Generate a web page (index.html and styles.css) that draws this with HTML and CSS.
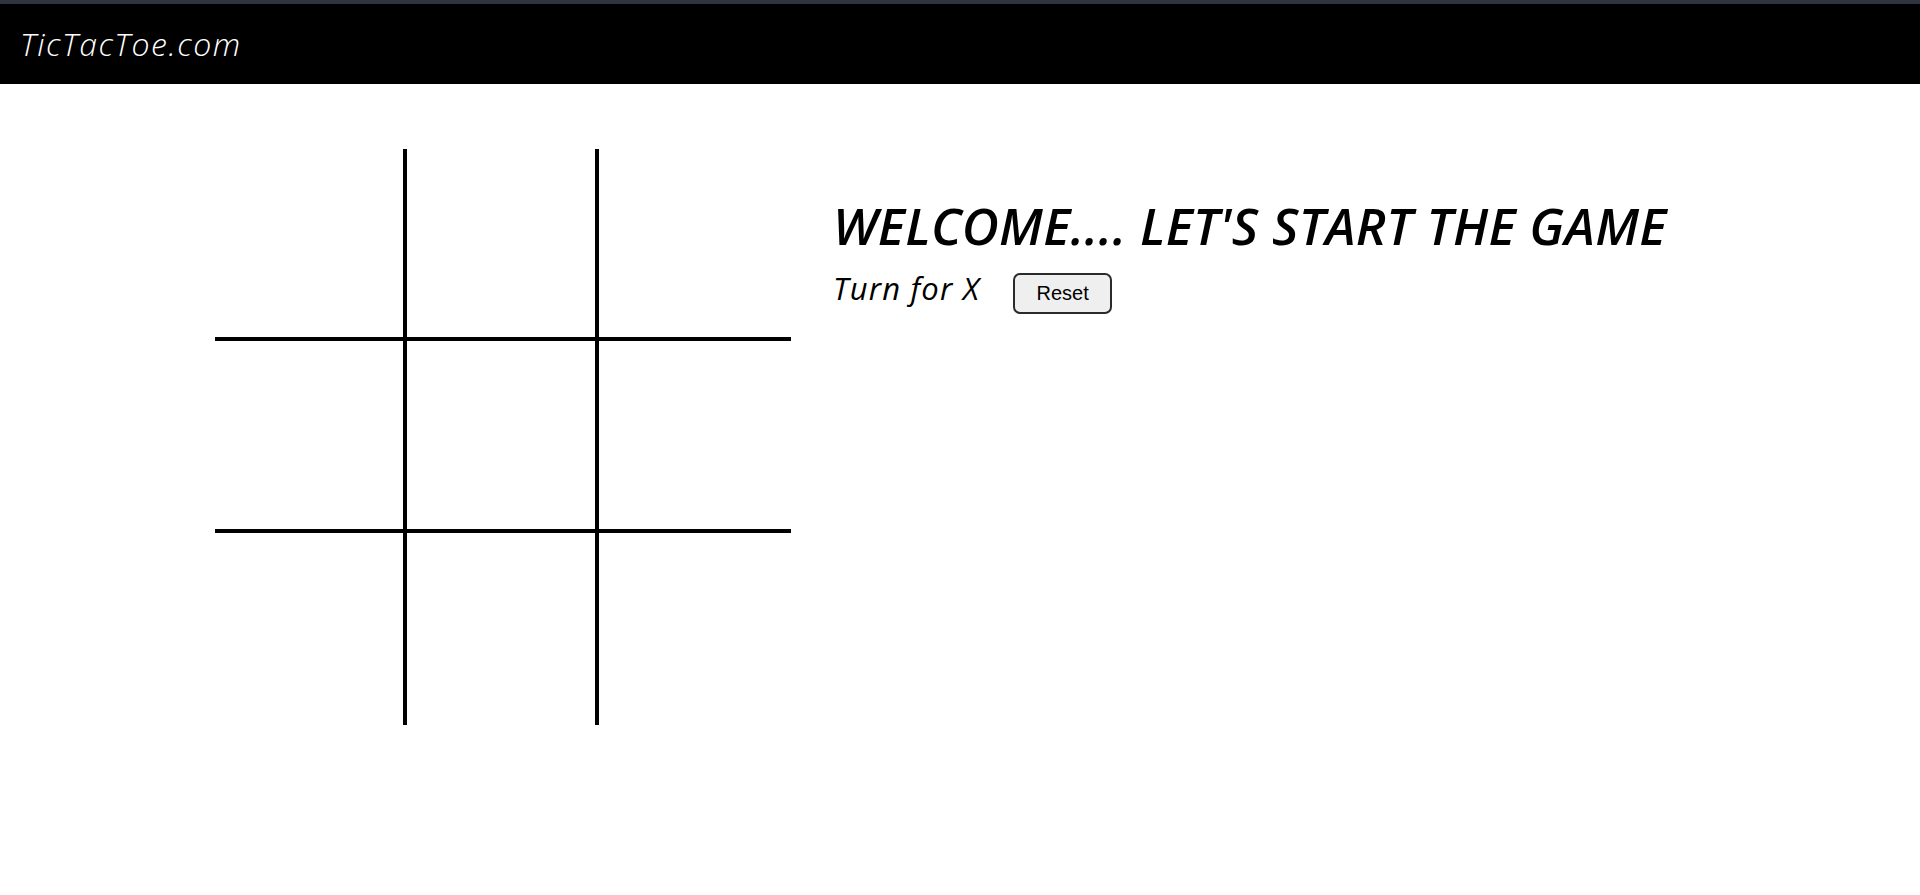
FILE: index.html
```html
<!DOCTYPE html>
<html lang="en">
<head>
<meta charset="utf-8">
<title>TicTacToe.com</title>
<link rel="stylesheet" href="styles.css">
</head>
<body>
<div class="topstrip"></div>
<nav class="navbar">
  <span class="brand">TicTacToe.com</span>
</nav>
<main class="gamecontainer">
  <div class="board">
    <div class="box br bb"></div>
    <div class="box br bb"></div>
    <div class="box bb"></div>
    <div class="box br bb"></div>
    <div class="box br bb"></div>
    <div class="box bb"></div>
    <div class="box br"></div>
    <div class="box br"></div>
    <div class="box"></div>
  </div>
  <div class="gameinfo">
    <h1 class="welcome">WELCOME.... LET'S START THE GAME</h1>
    <div class="turnrow">
      <span class="info">Turn for X</span>
      <button class="reset">Reset</button>
    </div>
  </div>
</main>
</body>
</html>
```
FILE: styles.css
```css
html, body {
  margin: 0;
  padding: 0;
  background: #ffffff;
}

.topstrip {
  height: 4px;
  background: #30343f;
}

.navbar {
  height: 80px;
  background: #000000;
  display: flex;
  align-items: center;
  padding-left: 20px;
}

.brand {
  color: #ffffff;
  font-family: "Open Sans", "Lato", sans-serif;
  font-weight: 300;
  font-style: italic;
  font-size: 32px;
  letter-spacing: 1.5px;
  position: relative;
  top: -1px;
}

.gamecontainer {
  display: flex;
  align-items: flex-start;
  padding: 65px 0 0 215px;
  gap: 42px;
}

.board {
  display: grid;
  grid-template-columns: repeat(3, 192px);
  grid-template-rows: repeat(3, 192px);
}

.box {
  box-sizing: border-box;
}

.br {
  border-right: 4px solid #000;
}

.bb {
  border-bottom: 4px solid #000;
}

.gameinfo {
  padding-top: 44px;
  font-family: "Open Sans", "Lato", sans-serif;
}

.welcome {
  margin: 0;
  font-size: 51px;
  font-weight: 600;
  font-style: italic;
  letter-spacing: 0.3px;
  line-height: 65px;
  color: #000;
}

.turnrow {
  display: flex;
  align-items: flex-start;
  gap: 33px;
  margin-top: 9px;
}

.info {
  font-size: 31px;
  font-style: italic;
  font-weight: 400;
  letter-spacing: 1.2px;
  color: #000;
}

.reset {
  margin-top: 6px;
  font-family: "Liberation Sans", Arial, sans-serif;
  font-size: 20px;
  width: 99px;
  height: 41px;
  padding: 0;
  border: 2px solid #2b2b2b;
  border-radius: 7px;
  background: #efefef;
  color: #000;
}
```
